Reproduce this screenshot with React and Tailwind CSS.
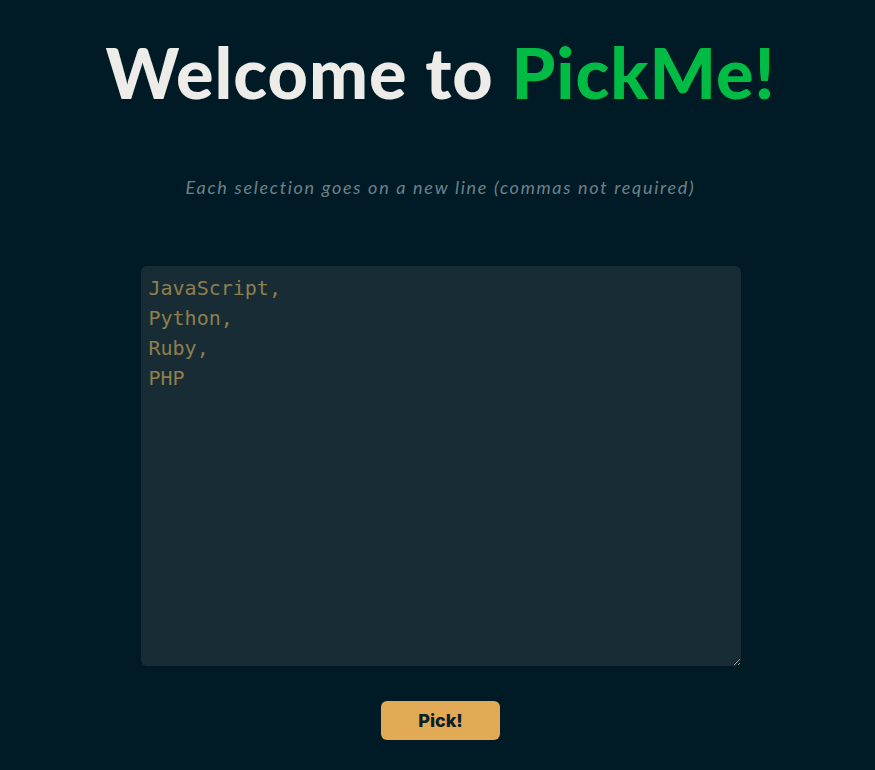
export default function App() {
  const defaultText = 'JavaScript,\nPython,\nRuby,\nPHP'

  return (
    <div className="min-h-[770px] bg-[#001b26] flex flex-col items-center pl-[6px]">
      <h1 className="mt-[30px] text-[70px] leading-[84px] font-black tracking-[1px] text-[#eeece8] font-['Lato',sans-serif]">
        Welcome to <span className="text-[#00bb44]">PickMe!</span>
      </h1>

      <p className="mt-[59px] text-[18px] leading-[28px] italic tracking-[1.7px] text-[#6e8189] font-['Lato',sans-serif]">
        Each selection goes on a new line (commas not required)
      </p>

      <textarea
        defaultValue={defaultText}
        className="mt-[65px] w-[600px] h-[400px] rounded-md bg-[#172c35] px-2 py-[7px] text-[20px] leading-[30px] text-[#907e4d] font-['DejaVu_Sans_Mono',monospace] outline-none resize"
      />

      <button className="mt-[35px] w-[119px] h-[39px] rounded-md bg-[#e2aa55] text-[18px] font-extrabold text-[#0a1f27] font-['Inter',sans-serif]">
        Pick!
      </button>
    </div>
  )
}
